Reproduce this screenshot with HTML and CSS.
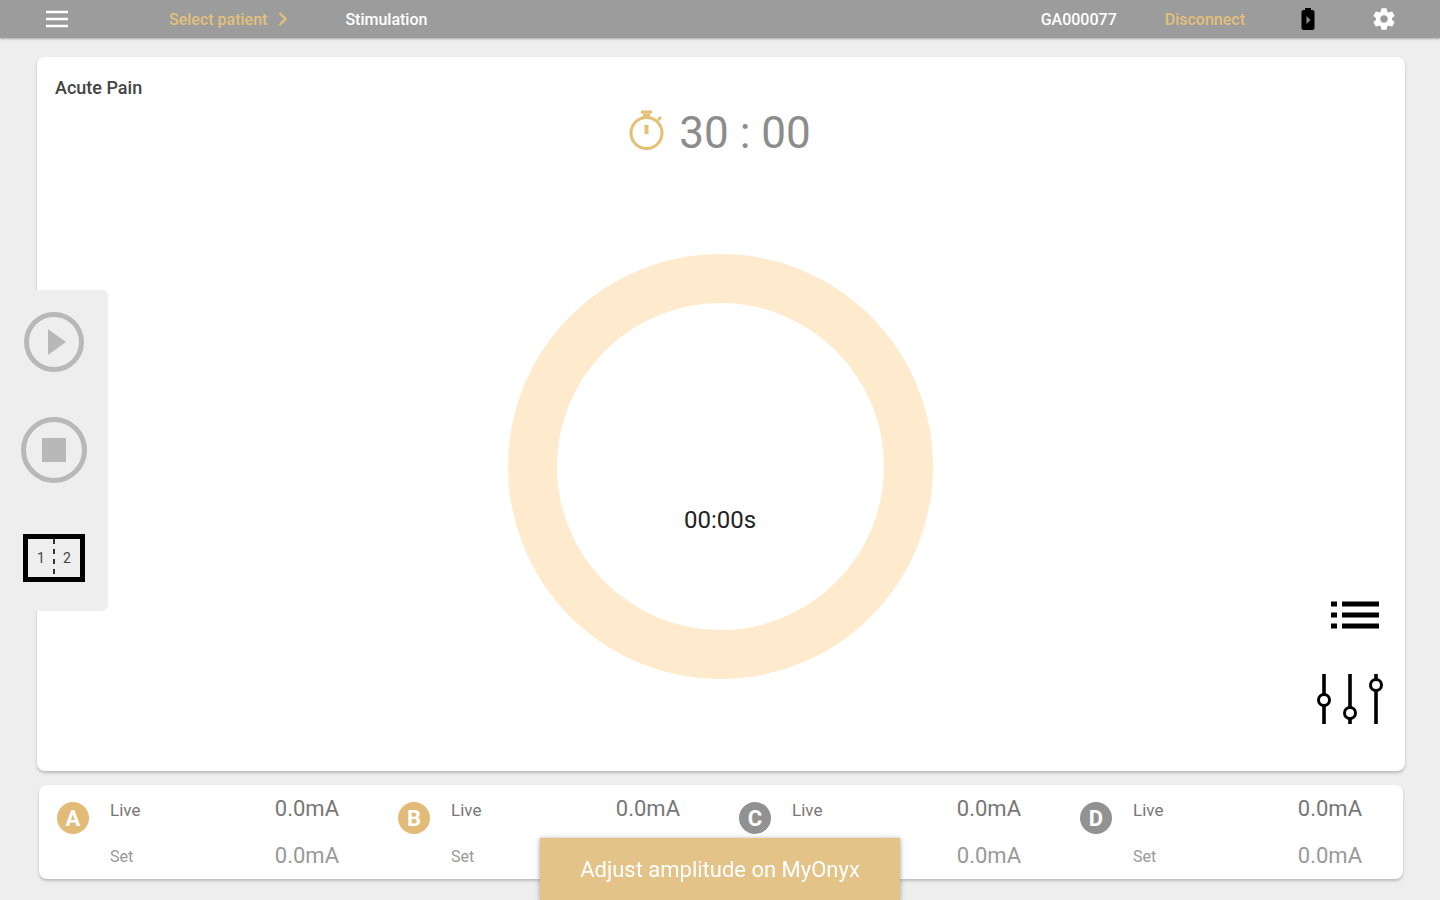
FILE: index.html
```html
<!DOCTYPE html>
<html lang="en">
<head>
<meta charset="utf-8">
<meta name="viewport" content="width=device-width, initial-scale=1">
<title>Stimulation</title>
<link rel="stylesheet" href="styles.css">
</head>
<body>
<div class="app">
  <header class="topbar">
    <button class="icon-button" type="button" aria-label="Menu">
      <svg width="24" height="24" viewBox="0 0 24 24"><path d="M1 5h22M1 12h22M1 19h22" stroke="#fff" stroke-width="2.6"/></svg>
    </button>
    <a class="patient" href="#">Select patient
      <svg width="10" height="16" viewBox="0 0 10 16"><path d="M1.500 2l6 6-6 6" fill="none" stroke="currentColor" stroke-width="2.4"/></svg>
    </a>
    <h1 class="title">Stimulation</h1>
    <span class="device">GA000077</span>
    <button class="disconnect" type="button">Disconnect</button>
    <svg class="battery" width="14" height="24" viewBox="0 0 14 24" role="img" aria-label="Battery"><path d="M4 1h6v2h1.500q2 0 2 2v16q0 2-2 2h-9q-2 0-2-2V5q0-2 2-2H4z" fill="#000"/><path d="M5.500 9l4 4-4 4z" fill="#8c8c8c"/></svg>
    <button class="icon-button settings" type="button" aria-label="Settings">
      <svg width="26" height="26" viewBox="0 0 24 24"><path fill="#fff" d="M19.430 12.980c.04-.32.07-.64.07-.98s-.03-.66-.07-.98l2.110-1.650c.19-.15.24-.42.12-.64l-2-3.460c-.12-.22-.39-.3-.61-.22l-2.490 1c-.52-.4-1.080-.73-1.690-.98l-.38-2.650C14.460 2.180 14.250 2 14 2h-4c-.25 0-.46.18-.49.42l-.38 2.650c-.61.25-1.170.59-1.690.98l-2.490-1c-.23-.09-.49 0-.61.22l-2 3.460c-.13.22-.07.49.12.64l2.110 1.650c-.04.32-.07.65-.07.98s.03.66.07.98l-2.110 1.650c-.19.15-.24.42-.12.64l2 3.460c.12.22.39.3.61.22l2.490-1c.52.4 1.080.73 1.690.98l.38 2.650c.03.24.24.42.49.42h4c.25 0 .46-.18.49-.42l.38-2.650c.61-.25 1.170-.59 1.690-.98l2.490 1c.23.09.49 0 .61-.22l2-3.460c.12-.22.07-.49-.12-.64l-2.110-1.650zM12 15.500c-1.930 0-3.500-1.570-3.500-3.500s1.570-3.500 3.500-3.500 3.500 1.570 3.500 3.500-1.570 3.500-3.500 3.500z"/></svg>
    </button>
  </header>

  <main class="content">
    <section class="card session">
      <h2 class="program">Acute Pain</h2>
      <div class="timer">
        <svg width="36" height="46" viewBox="0 0 36 46"><g fill="none" stroke="#e5bf72" stroke-width="3"><circle cx="17.500" cy="23" r="15.500"/><path d="M12 2h11"/><path d="M14 5h7M29 10l3-3"/><path d="M17.500 15v9" stroke-width="4"/></g></svg>
        <span>30 : 00</span>
      </div>
      <div class="stage">
        <div class="dial">
          <svg class="ring" viewBox="0 0 425 425"><circle cx="212.500" cy="212.500" r="188" fill="none" stroke="#feebcd" stroke-width="49"/></svg>
          <span class="elapsed">00:00s</span>
        </div>
        <div class="tools">
          <button class="icon-button" type="button" aria-label="List">
            <svg width="48" height="28" viewBox="0 0 48 28"><path d="M0 3h6M0 14h6M0 25h6M11 3h37M11 14h37M11 25h37" stroke="#000" stroke-width="5"/></svg>
          </button>
          <button class="icon-button" type="button" aria-label="Adjust parameters">
            <svg width="68" height="50" viewBox="0 0 68 50"><path d="M7 0v50M33 0v50M59 0v50" stroke="#000" stroke-width="3.600"/><g fill="#fff" stroke="#000" stroke-width="3"><circle cx="7" cy="26" r="5.500"/><circle cx="33" cy="39" r="5.500"/><circle cx="59" cy="11" r="5.500"/></g></svg>
          </button>
        </div>
      </div>
    </section>

    <section class="card channels" aria-label="Channels">
      <div class="channel">
        <span class="badge badge-on">A</span>
        <dl class="readings"><dt class="live">Live</dt><dd class="live">0.0mA</dd><dt>Set</dt><dd>0.0mA</dd></dl>
      </div>
      <div class="channel">
        <span class="badge badge-on">B</span>
        <dl class="readings"><dt class="live">Live</dt><dd class="live">0.0mA</dd><dt>Set</dt><dd>0.0mA</dd></dl>
      </div>
      <div class="channel">
        <span class="badge">C</span>
        <dl class="readings"><dt class="live">Live</dt><dd class="live">0.0mA</dd><dt>Set</dt><dd>0.0mA</dd></dl>
      </div>
      <div class="channel">
        <span class="badge">D</span>
        <dl class="readings"><dt class="live">Live</dt><dd class="live">0.0mA</dd><dt>Set</dt><dd>0.0mA</dd></dl>
      </div>
    </section>
  </main>

  <aside class="controls" aria-label="Stimulation controls">
    <button class="icon-button" type="button" aria-label="Start">
      <svg width="60" height="60" viewBox="0 0 60 60"><circle cx="30" cy="30" r="27.500" fill="none" stroke="#b8b8b8" stroke-width="5"/><path d="M24 17l18 13-18 13z" fill="#b8b8b8"/></svg>
    </button>
    <button class="icon-button" type="button" aria-label="Stop">
      <svg width="66" height="66" viewBox="0 0 66 66"><circle cx="33" cy="33" r="30.500" fill="none" stroke="#b8b8b8" stroke-width="5"/><path d="M21 21h24v24H21z" fill="#b8b8b8"/></svg>
    </button>
    <button class="split" type="button" aria-label="Split view"><span>1</span><span>2</span></button>
  </aside>

  <div class="toast" role="status">Adjust amplitude on MyOnyx</div>
</div>
</body>
</html>
```

FILE: styles.css
```css
* {
  box-sizing: border-box;
}

body {
  margin: 0;
  background: #eee;
  color: #444;
  font-family: Roboto, "Liberation Sans", sans-serif;
  font-size: 16px;
}

h1,
h2,
dl,
dd {
  margin: 0;
}

button {
  padding: 0;
  border: 0;
  background: none;
  font: inherit;
  cursor: pointer;
}

svg {
  display: block;
}

.app {
  position: relative;
  display: flex;
  flex-direction: column;
  min-height: 100vh;
}

.icon-button {
  display: block;
}

.topbar {
  display: flex;
  align-items: center;
  height: 38px;
  padding: 0 43px 0 45px;
  background: #9c9c9c;
  box-shadow: 0 1px 2px #aaa;
  color: #fff;
  font-weight: 500;
}

.patient {
  display: flex;
  align-items: center;
  gap: 11px;
  margin-left: 100px;
  color: #e2c07c;
  text-decoration: none;
}

.title {
  margin-left: 57px;
  font-size: 16px;
  font-weight: 500;
}

.device {
  margin-left: auto;
}

.disconnect {
  margin-left: 48px;
  color: #e2c07c;
}

.battery {
  margin-left: 56px;
}

.settings {
  margin-left: 56px;
}

.content {
  display: flex;
  flex: 1;
  flex-direction: column;
  gap: 14px;
  padding: 19px 35px 21px 37px;
}

.card {
  border-radius: 8px;
  background: #fff;
  box-shadow: 0 2px 3px #bbb;
}

.session {
  display: flex;
  flex: 1;
  flex-direction: column;
  padding: 20px 20px 47px 18px;
}

.program {
  font-size: 18px;
  font-weight: 500;
  line-height: 22px;
}

.timer {
  display: flex;
  align-items: center;
  justify-content: center;
  gap: 14px;
  margin-top: 7px;
  color: #8c8c8c;
  font-size: 44px;
  line-height: 54px;
}

.stage {
  display: grid;
  flex: 1;
  grid-template-columns: 1fr auto 1fr;
  margin-top: 94px;
}

.dial {
  position: relative;
  grid-column: 2;
  width: 425px;
}

.elapsed {
  position: absolute;
  top: 252px;
  right: 0;
  left: 0;
  color: #222;
  font-size: 24px;
  line-height: 28px;
  text-align: center;
}

.tools {
  display: flex;
  flex-direction: column;
  align-items: flex-end;
  align-self: end;
  gap: 45px;
}

.tools .icon-button:first-child {
  margin-right: 6px;
}

.channels {
  display: grid;
  grid-template-columns: repeat(4, 1fr);
  margin: 0 2px;
}

.channel {
  display: flex;
  padding: 0 41px 0 18px;
  gap: 21px;
}

.badge {
  width: 32px;
  height: 32px;
  margin-top: 17px;
  border-radius: 50%;
  background: #929292;
  color: #fff;
  font-size: 22px;
  font-weight: 700;
  line-height: 34px;
  text-align: center;
}

.badge-on {
  background: #e2bb78;
}

.readings {
  display: grid;
  flex: 1;
  grid-template-columns: 1fr auto;
  align-items: center;
  color: #999;
  line-height: 47px;
}

.readings dt {
  padding-top: 3px;
  line-height: 44px;
}

.readings dd {
  font-size: 22px;
}

.readings .live {
  color: #777;
}

.readings dt.live {
  font-size: 17px;
}

.controls {
  position: absolute;
  top: 290px;
  left: 0;
  display: flex;
  flex-direction: column;
  align-items: center;
  width: 108px;
  padding: 22px 0 29px;
  border-radius: 0 6px 6px 0;
  background: #eee;
  gap: 45px;
}

.controls .split {
  display: grid;
  grid-template-columns: 1fr 1fr;
  align-items: center;
  width: 62px;
  height: 48px;
  margin-top: 6px;
  border: 5px solid #000;
  background: linear-gradient(#333 50%, transparent 50%) center top / 2px 10px repeat-y;
  color: #444;
  font-size: 14px;
}

.toast {
  position: fixed;
  bottom: 0;
  left: 50%;
  width: 360px;
  padding: 2px 0 0;
  transform: translateX(-50%);
  background: #e4c388;
  box-shadow: 0 1px 5px #999;
  color: #fff;
  font-size: 22px;
  line-height: 60px;
  text-align: center;
}
```
